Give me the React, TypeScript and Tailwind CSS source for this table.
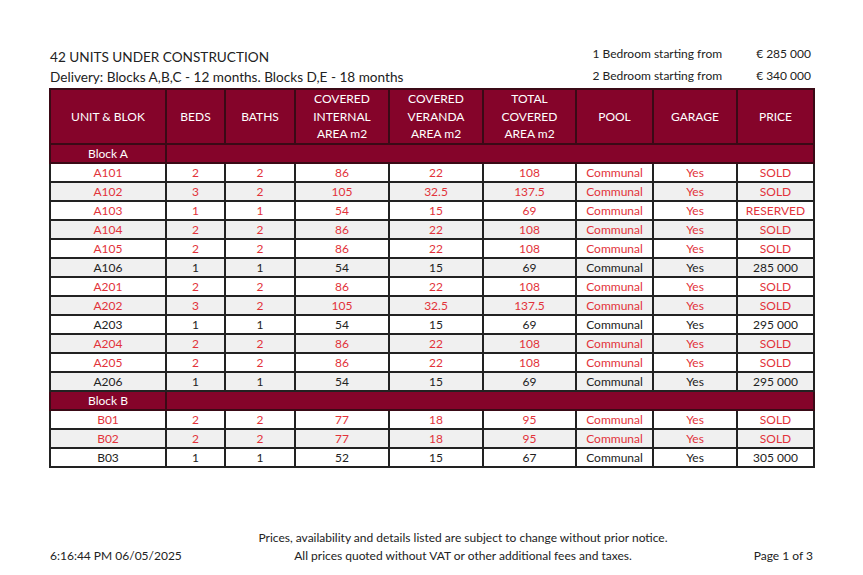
import React from "react";

type Row = { u: string; beds: string; baths: string; ia: string; va: string; tot: string; price: string; red: boolean };

const blockA: Row[] = [
  { u: "A101", beds: "2", baths: "2", ia: "86", va: "22", tot: "108", price: "SOLD", red: true },
  { u: "A102", beds: "3", baths: "2", ia: "105", va: "32.5", tot: "137.5", price: "SOLD", red: true },
  { u: "A103", beds: "1", baths: "1", ia: "54", va: "15", tot: "69", price: "RESERVED", red: true },
  { u: "A104", beds: "2", baths: "2", ia: "86", va: "22", tot: "108", price: "SOLD", red: true },
  { u: "A105", beds: "2", baths: "2", ia: "86", va: "22", tot: "108", price: "SOLD", red: true },
  { u: "A106", beds: "1", baths: "1", ia: "54", va: "15", tot: "69", price: "285 000", red: false },
  { u: "A201", beds: "2", baths: "2", ia: "86", va: "22", tot: "108", price: "SOLD", red: true },
  { u: "A202", beds: "3", baths: "2", ia: "105", va: "32.5", tot: "137.5", price: "SOLD", red: true },
  { u: "A203", beds: "1", baths: "1", ia: "54", va: "15", tot: "69", price: "295 000", red: false },
  { u: "A204", beds: "2", baths: "2", ia: "86", va: "22", tot: "108", price: "SOLD", red: true },
  { u: "A205", beds: "2", baths: "2", ia: "86", va: "22", tot: "108", price: "SOLD", red: true },
  { u: "A206", beds: "1", baths: "1", ia: "54", va: "15", tot: "69", price: "295 000", red: false },
];

const blockB: Row[] = [
  { u: "B01", beds: "2", baths: "2", ia: "77", va: "18", tot: "95", price: "SOLD", red: true },
  { u: "B02", beds: "2", baths: "2", ia: "77", va: "18", tot: "95", price: "SOLD", red: true },
  { u: "B03", beds: "1", baths: "1", ia: "52", va: "15", tot: "67", price: "305 000", red: false },
];

const widths = [116, 59, 70, 94, 94, 93, 77, 84, 77];

const headers: React.ReactNode[] = [
  "UNIT & BLOK",
  "BEDS",
  "BATHS",
  <>COVERED<br />INTERNAL<br />AREA m2</>,
  <>COVERED<br />VERANDA<br />AREA m2</>,
  <>TOTAL<br />COVERED<br />AREA m2</>,
  "POOL",
  "GARAGE",
  "PRICE",
];

function DataRow({ r, i }: { r: Row; i: number }) {
  const bg = i % 2 === 1 ? "bg-[#f0f0f0]" : "bg-white";
  const color = r.red ? "text-[#e2323a]" : "text-[#222222]";
  const cells = [r.u, r.beds, r.baths, r.ia, r.va, r.tot, "Communal", "Yes", r.price];
  return (
    <tr className={`${bg} ${color}`}>
      {cells.map((c, k) => (
        <td key={k} className="border-2 border-[#222222] h-[19px] p-0 text-center leading-[15px]">
          {c}
        </td>
      ))}
    </tr>
  );
}

function BlockRow({ name }: { name: string }) {
  return (
    <tr className="bg-[#85042a] text-white">
      <td className="border-2 border-[#3a0a16] h-[19px] p-0 text-center leading-[15px]">{name}</td>
      <td colSpan={8} className="border-2 border-[#3a0a16] h-[19px] p-0"></td>
    </tr>
  );
}

export default function App() {
  return (
    <div
      className="w-[863px] h-[575px] bg-white flex flex-col text-[#222222]"
      style={{ fontFamily: "Lato, 'Noto Sans', sans-serif" }}
    >
      <div className="flex justify-between pl-[50px] pr-[52px] pt-[47px]">
        <div className="text-[13.6px] leading-[20px]">
          <div>42 UNITS UNDER CONSTRUCTION</div>
          <div>Delivery: Blocks A,B,C - 12 months. Blocks D,E - 18 months</div>
        </div>
        <div className="text-[12px] leading-[21px] grid grid-cols-[auto_auto] gap-x-[34px] -mt-[4px]">
          <div>1 Bedroom starting from</div>
          <div>€ 285 000</div>
          <div>2 Bedroom starting from</div>
          <div>€ 340 000</div>
        </div>
      </div>
      <div className="pl-[49px] mt-[1px]">
        <table className="table-fixed border-collapse w-[766px] text-[12px]">
          <colgroup>
            {widths.map((w, i) => (
              <col key={i} style={{ width: w }} />
            ))}
          </colgroup>
          <thead>
            <tr className="bg-[#85042a] text-white">
              {headers.map((h, i) => (
                <th
                  key={i}
                  className="border-2 border-[#3a0a16] h-[53px] p-0 font-normal text-center leading-[17.6px]"
                >
                  {h}
                </th>
              ))}
            </tr>
          </thead>
          <tbody>
            <BlockRow name="Block A" />
            {blockA.map((r, i) => (
              <DataRow key={r.u} r={r} i={i} />
            ))}
            <BlockRow name="Block B" />
            {blockB.map((r, i) => (
              <DataRow key={r.u} r={r} i={i} />
            ))}
          </tbody>
        </table>
      </div>
      <div className="flex-1" />
      <div className="flex items-end pl-[50px] pr-[50px] pb-[10px] text-[12px] leading-[18px]">
        <div className="w-[200px]">6:16:44 PM 06/05/2025</div>
        <div className="flex-1 text-center">
          <div>Prices, availability and details listed are subject to change without prior notice.</div>
          <div>All prices quoted without VAT or other additional fees and taxes.</div>
        </div>
        <div className="w-[137px] text-right">Page 1 of 3</div>
      </div>
    </div>
  );
}
